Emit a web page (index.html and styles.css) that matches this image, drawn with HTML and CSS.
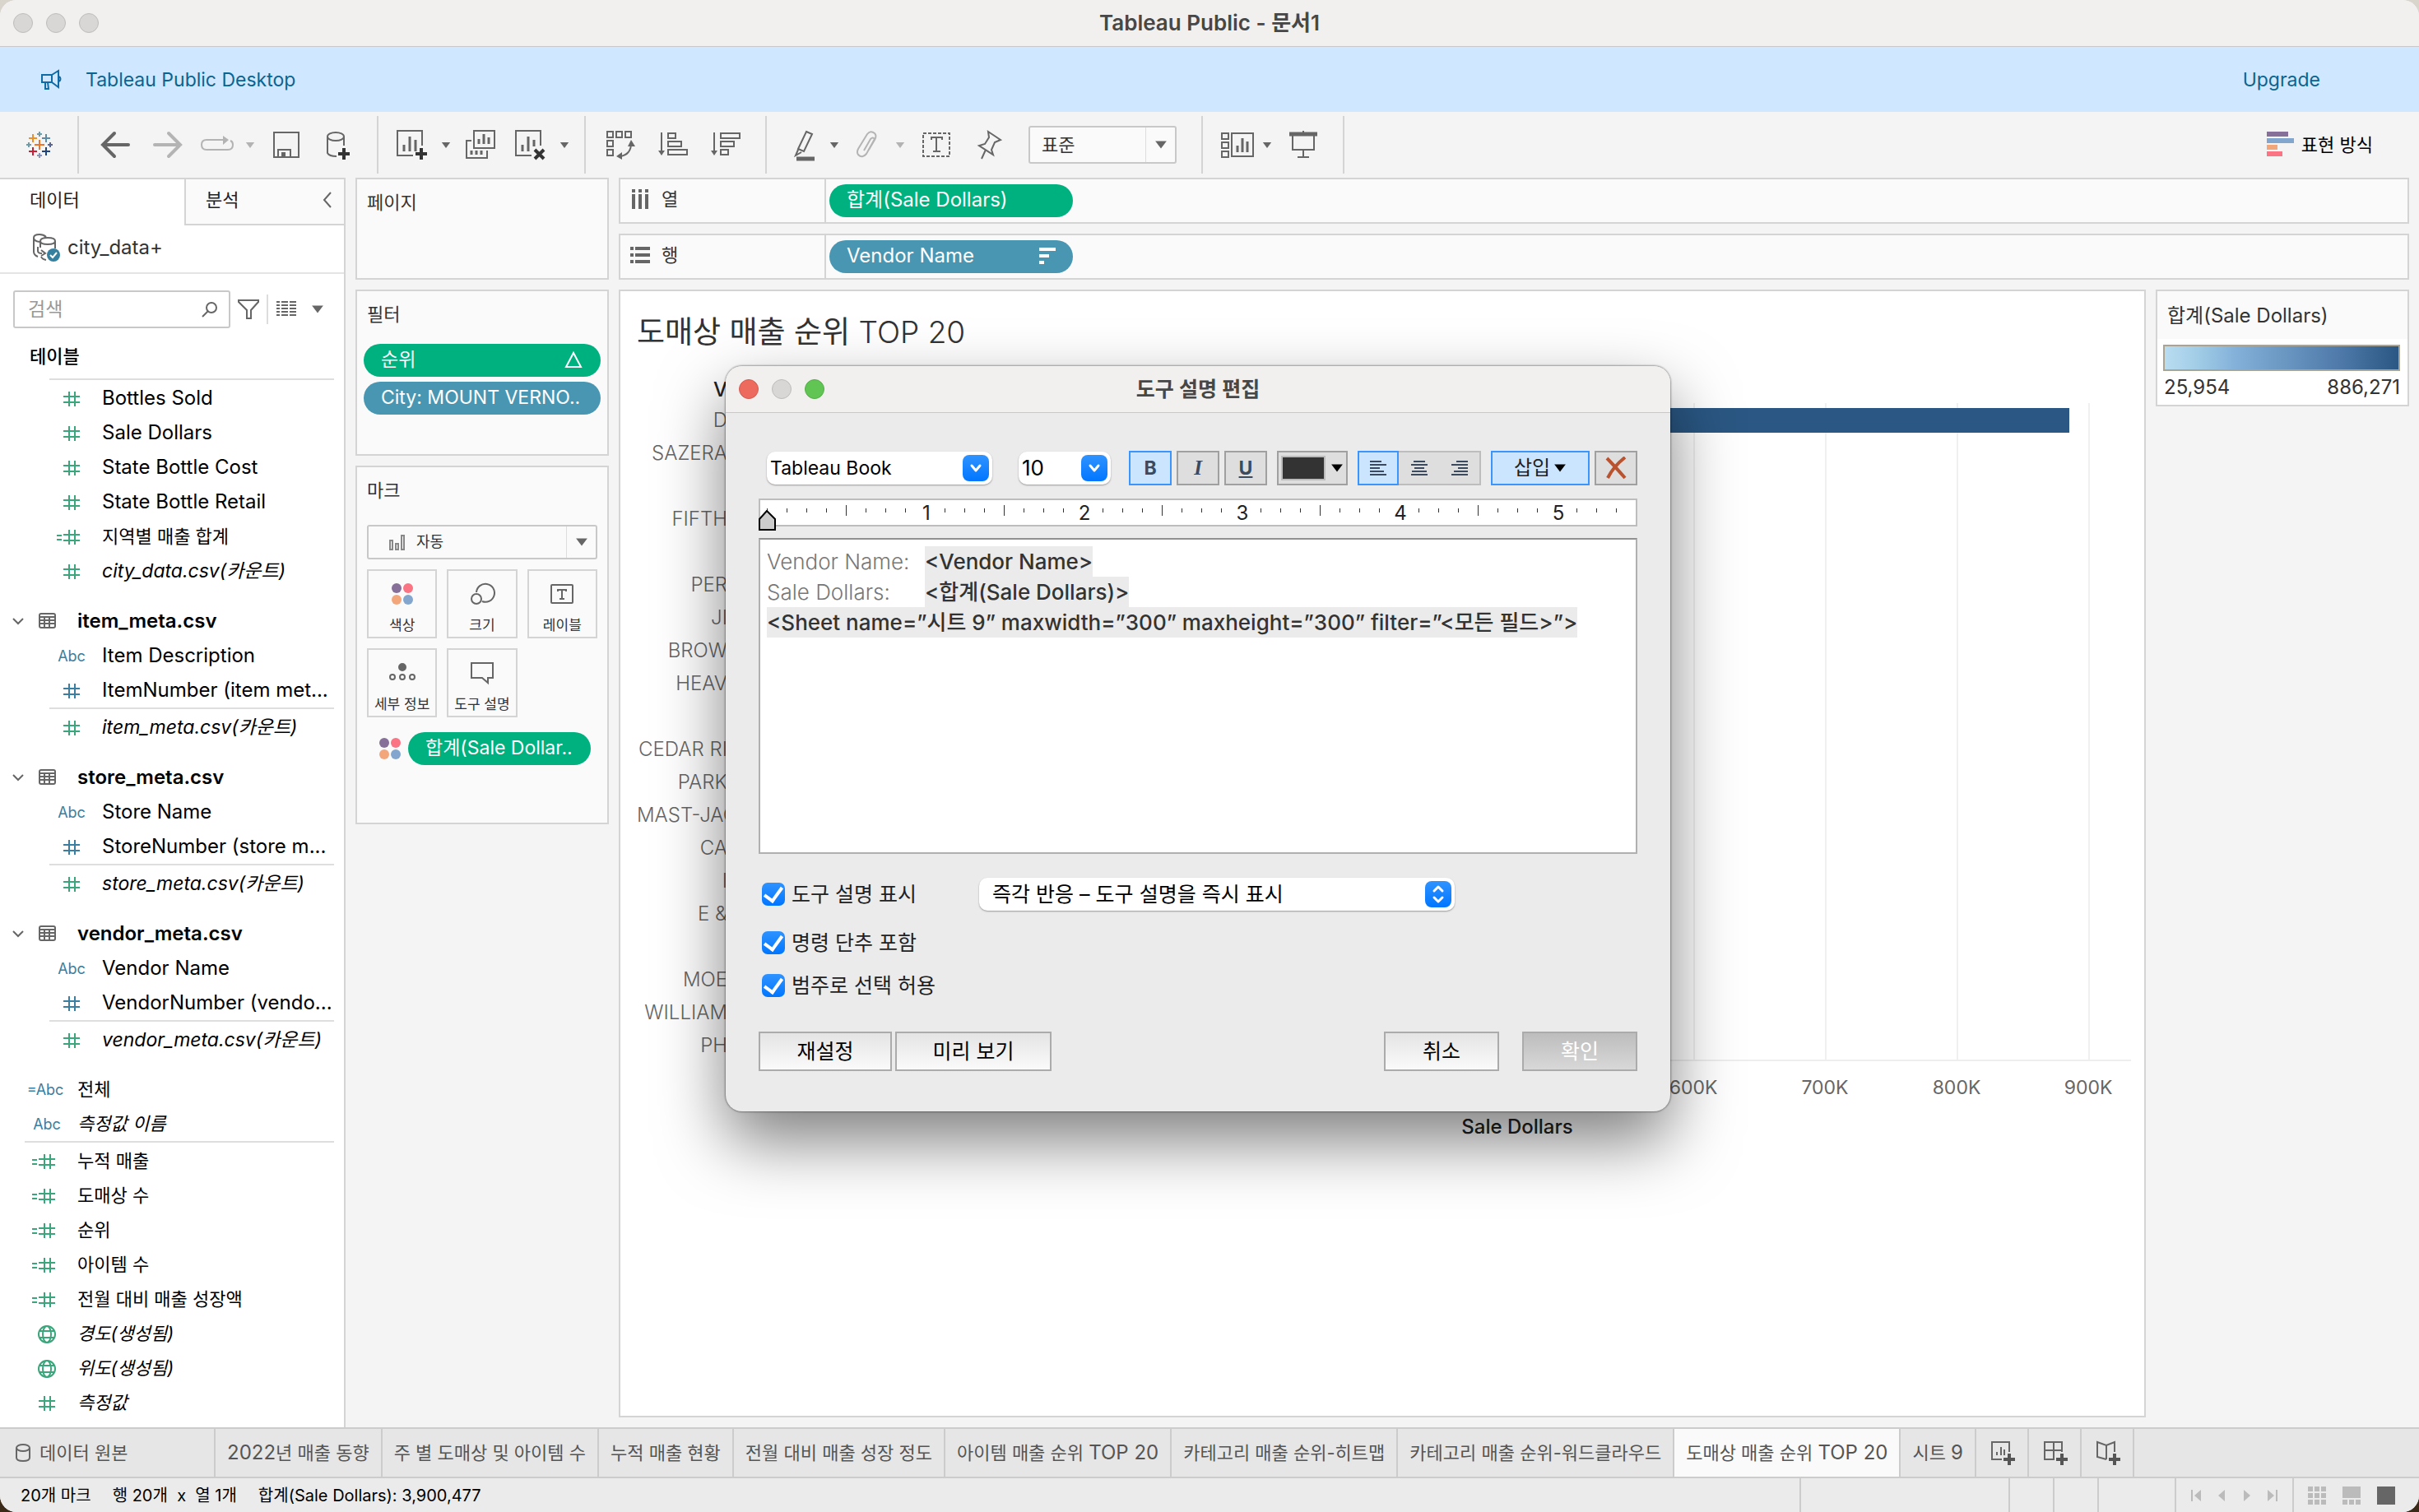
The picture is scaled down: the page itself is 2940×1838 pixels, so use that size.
FILE: index.html
```html
<!DOCTYPE html>
<html lang="ko">
<head>
    <meta charset="UTF-8">
    <meta name="viewport" content="width=device-width, initial-scale=1.0">
    <title>Tableau Public - 문서1</title>
    <link rel="stylesheet" href="styles.css">
</head>
<body>
<!-- 아이콘 모음 -->
<svg class="defs" aria-hidden="true">
    <symbol id="hash" viewBox="0 0 32 24"><path d="M13 3v18M20 3v18M6 9h20M6 16h20"/></symbol>
    <symbol id="calc" viewBox="0 0 50 24"><path d="M22 3v18M29 3v18M15 9h20M15 16h20M7 10h6M7 15h6"/></symbol>
    <symbol id="globe" viewBox="0 0 24 24"><circle cx="12" cy="12" r="10"/><ellipse cx="12" cy="12" rx="5" ry="10"/><path d="M3 8h18M3 16h18"/></symbol>
    <symbol id="sheet" viewBox="0 0 24 24"><rect x="2" y="3" width="19" height="17" rx="2"/><path d="M2 7h19M2 11h19M2 15h19M8 7v13M14 7v13"/></symbol>
    <symbol id="down" viewBox="0 0 14 10"><path d="M1 1h12L7 9z"/></symbol>
    <symbol id="chev" viewBox="0 0 16 16"><path d="M2 5l6 6 6-6"/></symbol>
</svg>

<div class="window">
    <header class="titlebar">
        <span class="light"></span><span class="light"></span><span class="light"></span>
        <h1>Tableau Public - 문서1</h1>
    </header>

    <div class="banner">
        <svg width="28" height="28" viewBox="0 0 28 28"><path d="M3 8h12v9H3zM15 8l8-5v20l-8-6M24 10q3 3 0 6M7 17v8h4l-1-8"/></svg>
        <span>Tableau Public Desktop</span>
        <a href="#">Upgrade</a>
    </div>

    <div class="toolbar">
        <div class="group g1">
            <button type="button" aria-label="시작"><svg viewBox="0 0 36 36">
                <path d="M18 12v12M12 18h12" stroke="#e8762d"/>
                <path d="M10 5v10M5 10h10" stroke="#eb912b"/>
                <path d="M26 5v10M21 10h10" stroke="#5c8ca7"/>
                <path d="M10 21v10M5 26h10" stroke="#c72035"/>
                <path d="M26 21v10M21 26h10" stroke="#1f447e"/>
                <path d="M18 2v6M15 5h6M5 15v6M2 18h6" stroke="#7199a6"/>
                <path d="M31 15v6M28 18h6" stroke="#5b6591"/>
                <path d="M18 28v6M15 31h6" stroke="#8a94bb"/>
            </svg></button>
        </div>
        <div class="group g2">
            <button type="button" class="w64" aria-label="뒤로"><svg viewBox="0 0 36 36"><path class="bold" d="M17 4L3 18l14 14M3 18h31"/></svg></button>
            <button type="button" class="w64 off" aria-label="앞으로"><svg viewBox="0 0 36 36"><path class="bold" d="M19 4l14 14-14 14M33 18H2"/></svg></button>
            <button type="button" class="w56 off" aria-label="재실행"><svg class="wide" viewBox="0 0 42 36"><path d="M28 12H8q-6 0-6 6t6 6h26q6 0 6-6 0-4-3-5"/><path class="fill" stroke="none" d="M28 7l7 5-7 6z"/></svg></button>
            <button type="button" class="w24 off" aria-label="메뉴"><svg class="caret"><use href="#down"/></svg></button>
            <button type="button" class="w64" aria-label="저장"><svg viewBox="0 0 36 36"><path d="M3 3h30v30H3zM8 33v-9h15v9"/><path class="fill" stroke="none" d="M12 27h5v5h-5z"/></svg></button>
            <button type="button" class="w64" aria-label="새 데이터 원본"><svg viewBox="0 0 36 36"><ellipse cx="14" cy="8" rx="10" ry="5"/><path d="M4 8v20q2 4 11 4M24 8v11"/><path class="add" d="M24 22v14M17 29h14"/></svg></button>
        </div>
        <div class="group g3">
            <button type="button" class="w60" aria-label="새 워크시트"><svg viewBox="0 0 36 36"><path d="M20 31H1V1h30v18"/><path class="bar3" d="M9 26v-8M16 26V8M23 26V12"/><path class="add" d="M30 22v14M23 29h14"/></svg></button>
            <button type="button" class="w24" aria-label="메뉴"><svg class="caret"><use href="#down"/></svg></button>
            <button type="button" class="w60" aria-label="복제"><svg viewBox="0 0 36 36"><path d="M10 1h25v21H10zM7 13H1v21h25v-9"/><path class="bar3" d="M16 17v-6M22 17V5M28 17V9M7 30v-5M13 30v-5M19 30v-5"/></svg></button>
            <button type="button" class="w60" aria-label="지우기"><svg viewBox="0 0 36 36"><path d="M20 31H1V1h30v18"/><path class="bar3" d="M9 26v-8M16 26V8M23 20v-8"/><path class="add" d="M24 24l11 11M35 24L24 35"/></svg></button>
            <button type="button" class="w24" aria-label="메뉴"><svg class="caret"><use href="#down"/></svg></button>
        </div>
        <div class="group g4">
            <button type="button" class="w64" aria-label="행과 열 바꾸기"><svg viewBox="0 0 36 36"><path d="M2 2h7v7H2zM13 2h7v7h-7zM24 2h7v7h-7zM2 13h7v7H2zM2 24h7v7H2zM18 32q12-2 13-14"/><path class="fill" stroke="none" d="M31 12l5 8h-9zM13 32l7-5v9z"/></svg></button>
            <button type="button" class="w64" aria-label="오름차순"><svg viewBox="0 0 36 36"><path d="M4 3v24M12 4h9v6h-9zM12 14h16v6H12zM12 24h23v6H12z"/><path class="fill" stroke="none" d="M0 25h8l-4 6z"/></svg></button>
            <button type="button" class="w64" aria-label="내림차순"><svg viewBox="0 0 36 36"><path d="M4 3v24M12 4h23v6H12zM12 14h16v6H12zM12 24h9v6h-9z"/><path class="fill" stroke="none" d="M0 25h8l-4 6z"/></svg></button>
        </div>
        <div class="group g5">
            <button type="button" class="w48" aria-label="하이라이트"><svg viewBox="0 0 36 36"><path d="M20 2l7 3-10 21-7-3zM10 24l-3 7 7-4"/><path class="heavy" d="M8 35h22"/></svg></button>
            <button type="button" class="w24" aria-label="메뉴"><svg class="caret"><use href="#down"/></svg></button>
            <button type="button" class="w56 off" aria-label="그룹"><svg viewBox="0 0 36 36"><path d="M14 25l8-14q3-3 5 0l-10 18q-5 6-10 1-2-3 0-7L18 5q4-5 9-1 3 3 0 8l-7 12"/></svg></button>
            <button type="button" class="w24 off" aria-label="메뉴"><svg class="caret"><use href="#down"/></svg></button>
            <button type="button" class="w64" aria-label="마크 레이블"><svg viewBox="0 0 36 36"><path stroke-dasharray="4 2" d="M2 4h32v28H2z"/><path d="M12 12V9h13v3M18 9v17M14 26h9"/></svg></button>
            <button type="button" class="w64" aria-label="고정"><svg viewBox="0 0 36 36"><path d="M17 2l15 10-7 3-4 9 2 6L6 19l7-2 5-8zM14 24L9 35"/></svg></button>
            <span class="drop fit">
                <select aria-label="맞춤"><option>표준</option></select>
                <span class="drop-arrow"><svg class="caret big"><use href="#down"/></svg></span>
            </span>
        </div>
        <div class="group g6">
            <button type="button" class="w48" aria-label="카드 표시"><svg class="wide" viewBox="0 0 42 36"><path d="M2 4h8v7H2zM2 15h8v7H2zM2 26h8v7H2zM14 4h26v28H14z"/><path class="bar3" d="M21 27v-8M27 27V10M33 27V14"/></svg></button>
            <button type="button" class="w24" aria-label="메뉴"><svg class="caret"><use href="#down"/></svg></button>
            <button type="button" class="w64" aria-label="프레젠테이션"><svg viewBox="0 0 36 36"><path class="heavy" d="M1 5h34"/><path d="M18 1v3M5 6v18h26V6M18 24v9M11 33h14"/></svg></button>
        </div>
        <button type="button" class="showme">
            <svg viewBox="0 0 34 32"><path fill="#866f99" d="M0 0h26v6H0z"/><path fill="#83a6ce" d="M0 8h33v6H0z"/><path fill="#f2a67a" d="M0 16h13v6H0z"/><path fill="#fa7484" d="M0 24h19v6H0z"/></svg>
            표현 방식
        </button>
    </div>

    <main class="work">
        <!-- 데이터 패널 -->
        <aside class="side">
            <div class="side-tabs">
                <button type="button" class="on">데이터</button>
                <button type="button">분석
                    <svg width="12" height="20" viewBox="0 0 12 20"><path d="M10 1L2 10l8 9"/></svg>
                </button>
            </div>
            <div class="source">
                <svg width="36" height="36" viewBox="0 0 36 36"><path d="M18 5Q15 2 10 2 3 2 3 6v17q0 4 5 6M3 6q0 4 7 5M8 17v5q0 3 5 3M12 21l5 4-5 3M11 10q0-4 9-4t9 4-9 4-9-4v8M29 10v9M12 29q1 3 6 4"/><circle cx="27" cy="27" r="8" fill="#35809f" stroke="none"/><path class="tick" d="M23 27l3 3 5-6"/></svg>
                <span>city_data+</span>
            </div>
            <div class="search-row">
                <label class="search">
                    <input type="text" placeholder="검색" aria-label="검색">
                    <svg width="22" height="22" viewBox="0 0 22 22"><circle cx="13" cy="9" r="6"/><path d="M9 13l-7 7"/></svg>
                </label>
                <button type="button" aria-label="필터"><svg width="28" height="28" viewBox="0 0 28 28"><path d="M2 3h24v2l-9 10v10h-5V15L2 5z"/></svg></button>
                <button type="button" class="view" aria-label="보기"><svg width="26" height="22" viewBox="0 0 26 22"><path stroke-dasharray="4 2 8 2 8 2" d="M0 2h25M0 6h25M0 10h25M0 14h25M0 18h25"/></svg></button>
                <button type="button" aria-label="메뉴"><svg class="caret big"><use href="#down"/></svg></button>
            </div>
            <h2>테이블</h2>
            <ul class="fields sub line">
                <li><svg class="ic g"><use href="#hash"/></svg>Bottles Sold</li>
                <li><svg class="ic g"><use href="#hash"/></svg>Sale Dollars</li>
                <li><svg class="ic g"><use href="#hash"/></svg>State Bottle Cost</li>
                <li><svg class="ic g"><use href="#hash"/></svg>State Bottle Retail</li>
                <li class="ko"><svg class="ic g"><use href="#calc"/></svg>지역별 매출 합계</li>
                <li class="it"><svg class="ic g"><use href="#hash"/></svg>city_data.csv(카운트)</li>
            </ul>
            <h3><svg class="ch"><use href="#chev"/></svg><svg class="tb"><use href="#sheet"/></svg>item_meta.csv</h3>
            <ul class="fields sub">
                <li><span class="ic">Abc</span>Item Description</li>
                <li><svg class="ic b"><use href="#hash"/></svg>ItemNumber (item met...</li>
            </ul>
            <ul class="fields sub line">
                <li class="it"><svg class="ic g"><use href="#hash"/></svg>item_meta.csv(카운트)</li>
            </ul>
            <h3><svg class="ch"><use href="#chev"/></svg><svg class="tb"><use href="#sheet"/></svg>store_meta.csv</h3>
            <ul class="fields sub">
                <li><span class="ic">Abc</span>Store Name</li>
                <li><svg class="ic b"><use href="#hash"/></svg>StoreNumber (store m...</li>
            </ul>
            <ul class="fields sub line">
                <li class="it"><svg class="ic g"><use href="#hash"/></svg>store_meta.csv(카운트)</li>
            </ul>
            <h3><svg class="ch"><use href="#chev"/></svg><svg class="tb"><use href="#sheet"/></svg>vendor_meta.csv</h3>
            <ul class="fields sub">
                <li><span class="ic">Abc</span>Vendor Name</li>
                <li><svg class="ic b"><use href="#hash"/></svg>VendorNumber (vendo...</li>
            </ul>
            <ul class="fields sub line">
                <li class="it"><svg class="ic g"><use href="#hash"/></svg>vendor_meta.csv(카운트)</li>
            </ul>
            <ul class="fields root first">
                <li><span class="ic eq">=Abc</span>전체</li>
                <li><span class="ic">Abc</span><em>측정값 이름</em></li>
            </ul>
            <ul class="fields root line">
                <li><svg class="ic g"><use href="#calc"/></svg>누적 매출</li>
                <li><svg class="ic g"><use href="#calc"/></svg>도매상 수</li>
                <li><svg class="ic g"><use href="#calc"/></svg>순위</li>
                <li><svg class="ic g"><use href="#calc"/></svg>아이템 수</li>
                <li><svg class="ic g"><use href="#calc"/></svg>전월 대비 매출 성장액</li>
                <li><svg class="ic g"><use href="#globe"/></svg><em>경도(생성됨)</em></li>
                <li><svg class="ic g"><use href="#globe"/></svg><em>위도(생성됨)</em></li>
                <li><svg class="ic g"><use href="#hash"/></svg><em>측정값</em></li>
            </ul>
        </aside>

        <!-- 페이지, 필터, 마크 카드 -->
        <div class="cards">
            <section class="card pages"><h2>페이지</h2></section>
            <section class="card filters">
                <h2>필터</h2>
                <div class="pill green">순위<svg width="24" height="22" viewBox="0 0 24 22"><path d="M12 3l9 17H3z"/></svg></div>
                <div class="pill blue">City: MOUNT VERNO..</div>
            </section>
            <section class="card marks">
                <h2>마크</h2>
                <span class="drop type">
                    <svg class="type-icon" viewBox="0 0 20 20"><path d="M2 8h3v11H2zM9 12h3v7H9zM16 2h3v17h-3z"/></svg>
                    <select aria-label="마크 유형"><option>자동</option></select>
                    <span class="drop-arrow"><svg class="caret big"><use href="#down"/></svg></span>
                </span>
                <div class="tiles">
                    <button type="button"><svg class="dots" viewBox="0 0 32 32"><circle cx="9" cy="9" r="6" fill="#866f99"/><circle cx="23" cy="9" r="6" fill="#fa7484"/><circle cx="9" cy="23" r="6" fill="#f2a67a"/><circle cx="23" cy="23" r="6" fill="#83a6ce"/></svg>색상</button>
                    <button type="button"><svg viewBox="0 0 32 32"><path d="M9 14A11 11 0 1 1 16 25"/><circle cx="9" cy="22" r="6"/></svg>크기</button>
                    <button type="button"><svg viewBox="0 0 32 32"><rect x="3" y="5" width="26" height="22" rx="1"/><path d="M11 13v-2h10v2M16 11v11M13 22h6"/></svg>레이블</button>
                    <button type="button"><svg viewBox="0 0 32 32"><circle cx="16" cy="9" r="4" fill="#666"/><circle cx="4" cy="21" r="3"/><circle cx="16" cy="21" r="3"/><circle cx="28" cy="21" r="3"/></svg>세부 정보</button>
                    <button type="button"><svg viewBox="0 0 32 32"><path d="M3 4h26v18h-6v6l-7-6H3z"/></svg>도구 설명</button>
                </div>
                <div class="mark-field">
                    <svg class="dots" viewBox="0 0 32 32"><circle cx="9" cy="9" r="6" fill="#866f99"/><circle cx="23" cy="9" r="6" fill="#fa7484"/><circle cx="9" cy="23" r="6" fill="#f2a67a"/><circle cx="23" cy="23" r="6" fill="#83a6ce"/></svg>
                    <div class="pill green">합계(Sale Dollar..</div>
                </div>
            </section>
        </div>

        <div class="view-area">
            <div class="card shelf">
                <h2><svg width="24" height="24" viewBox="0 0 24 24"><path stroke-width="4" d="M4 0v4M12 0v4M20 0v4M4 6v18M12 6v18M20 6v18"/></svg>열</h2>
                <div class="pill green">합계(Sale Dollars)</div>
            </div>
            <div class="card shelf">
                <h2><svg width="24" height="24" viewBox="0 0 24 24"><path stroke-width="4" d="M0 4h4M0 12h4M0 20h4M6 4h18M6 12h18M6 20h18"/></svg>행</h2>
                <div class="pill blue">Vendor Name<svg width="20" height="22" viewBox="0 0 20 22"><path fill="#fff" stroke="none" d="M0 1h20v4H0zM0 9h12v4H0zM0 17h6v4H0z"/></svg></div>
            </div>
            <div class="lower">
                <section class="card canvas">
                    <h2>도매상 매출 순위 <span>TOP 20</span></h2>
                    <div class="chart">
                        <div class="names">
                            <b>V</b>
                            <span>D</span><span>SAZERA</span><span></span><span>FIFTH</span><span></span>
                            <span>PER</span><span>JI</span><span>BROW</span><span>HEAV</span><span></span>
                            <span>CEDAR RI</span><span>PARK</span><span>MAST-JAC</span><span>CA</span><span>I</span>
                            <span>E &amp;</span><span></span><span>MOE</span><span>WILLIAM</span><span>PH</span>
                        </div>
                        <div class="plot-col">
                            <div class="plot"><div class="bar" style="width: 95%"></div></div>
                            <div class="ticks"><span>600K</span><span>700K</span><span>800K</span><span>900K</span></div>
                            <div class="axis-name">Sale Dollars</div>
                        </div>
                    </div>
                </section>
                <section class="card legend">
                    <h2>합계(Sale Dollars)</h2>
                    <div class="ramp"></div>
                    <div class="range"><span>25,954</span><span>886,271</span></div>
                </section>
            </div>
        </div>
    </main>

    <nav class="sheets">
        <a href="#" class="origin"><svg width="20" height="24" viewBox="0 0 20 24"><ellipse cx="10" cy="6" rx="8" ry="4"/><path d="M2 6v12q0 4 8 4t8-4V6"/></svg>데이터 원본</a>
        <a href="#"><span class="lat">2022</span>년 매출 동향</a>
        <a href="#">주 별 도매상 및 아이템 수</a>
        <a href="#">누적 매출 현황</a>
        <a href="#">전월 대비 매출 성장 정도</a>
        <a href="#">아이템 매출 순위 <span class="lat">TOP 20</span></a>
        <a href="#">카테고리 매출 순위-히트맵</a>
        <a href="#">카테고리 매출 순위-워드클라우드</a>
        <a href="#" class="on">도매상 매출 순위 <span class="lat">TOP 20</span></a>
        <a href="#">시트 <span class="lat">9</span></a>
        <button type="button" aria-label="새 워크시트"><svg viewBox="0 0 32 32"><path d="M15 24H3V3h21v12M9 19v-4M14 19V9M18 19v-7"/><path class="add" d="M24 17v14M17 24h14"/></svg></button>
        <button type="button" aria-label="새 대시보드"><svg viewBox="0 0 32 32"><path d="M15 24H3V3h21v12M3 13h21M14 3v21"/><path class="add" d="M24 17v14M17 24h14"/></svg></button>
        <button type="button" aria-label="새 스토리"><svg viewBox="0 0 32 32"><path d="M14 24L3 21V3l11 4 10-4v12M14 7v17"/><path class="add" d="M24 17v14M17 24h14"/></svg></button>
    </nav>

    <footer class="status">
        <span>20개 마크</span><span>행 20개&nbsp; x &nbsp;열 1개</span><span>합계(Sale Dollars): 3,900,477</span>
        <div class="cells"><i class="c1"></i><i class="c2"></i><i class="c2"></i><i class="c3"></i></div>
        <div class="pager">
            <button type="button" aria-label="처음"><svg viewBox="0 0 14 14"><path d="M1 0h2v14H1zM13 0v14L5 7z"/></svg></button>
            <button type="button" aria-label="이전"><svg viewBox="0 0 14 14"><path d="M11 0v14L3 7z"/></svg></button>
            <button type="button" aria-label="다음"><svg viewBox="0 0 14 14"><path d="M3 0v14l8-7z"/></svg></button>
            <button type="button" aria-label="마지막"><svg viewBox="0 0 14 14"><path d="M1 0v14l8-7zM11 0h2v14h-2z"/></svg></button>
        </div>
        <div class="modes">
            <button type="button" aria-label="시트 정렬"><svg viewBox="0 0 22 22"><path d="M0 0h6v6H0zM8 0h6v6H8zM16 0h6v6h-6zM0 8h6v6H0zM8 8h6v6H8zM16 8h6v6h-6zM0 16h6v6H0zM8 16h6v6H8zM16 16h6v6h-6z"/></svg></button>
            <button type="button" aria-label="필름 스트립"><svg viewBox="0 0 22 22"><path d="M0 0h22v14H0zM0 16h6v6H0zM8 16h6v6H8zM16 16h6v6h-6z"/></svg></button>
            <button type="button" class="on" aria-label="탭"><svg viewBox="0 0 22 22"><path d="M0 0h22v22H0z"/></svg></button>
        </div>
    </footer>

    <!-- 도구 설명 편집 창 -->
    <div class="dialog" role="dialog" aria-labelledby="dlgTitle">
        <div class="titlebar">
            <span class="light red"></span><span class="light"></span><span class="light lime"></span>
            <h2 id="dlgTitle">도구 설명 편집</h2>
        </div>
        <form class="dlg-body">
            <div class="format">
                <span class="combo font"><select aria-label="글꼴"><option>Tableau Book</option></select><svg class="cap" viewBox="0 0 32 32"><path d="M11 13l5 6 5-6"/></svg></span>
                <span class="combo size"><select aria-label="크기"><option>10</option></select><svg class="cap" viewBox="0 0 32 32"><path d="M11 13l5 6 5-6"/></svg></span>
                <div class="btns">
                    <button type="button" class="on"><b>B</b></button>
                    <button type="button"><i>I</i></button>
                    <button type="button"><u>U</u></button>
                </div>
                <button type="button" class="color" aria-label="색상"><span></span><svg class="caret big"><use href="#down"/></svg></button>
                <div class="aligns">
                    <button type="button" class="on" aria-label="왼쪽"><svg viewBox="0 0 22 20"><path d="M1 2h14M1 6h20M1 10h12M1 14h17M1 18h20"/></svg></button>
                    <button type="button" aria-label="가운데"><svg viewBox="0 0 22 20"><path d="M4 2h14M1 6h20M5 10h12M2 14h18M1 18h20"/></svg></button>
                    <button type="button" aria-label="오른쪽"><svg viewBox="0 0 22 20"><path d="M7 2h14M1 6h20M9 10h12M4 14h17M1 18h20"/></svg></button>
                </div>
                <div class="btns">
                    <button type="button" class="insert on">삽입<svg class="caret big"><use href="#down"/></svg></button>
                    <button type="button" aria-label="지우기"><svg width="28" height="28" viewBox="0 0 28 28"><path d="M3 2q8 8 22 24M25 1Q11 12 4 26" stroke="#b9532f" stroke-width="4"/></svg></button>
                </div>
            </div>
            <div class="ruler">
                <svg class="marker" width="22" height="26" viewBox="0 0 22 26"><path d="M1 11L10 1l10 10v13H1z" fill="#ccc" stroke="#000" stroke-width="2"/></svg>
                <span>1</span><span>2</span><span>3</span><span>4</span><span>5</span>
            </div>
            <div class="editor" contenteditable="true" role="textbox" aria-label="도구 설명">
                <p><span class="key">Vendor Name:</span><mark>&lt;Vendor Name&gt;</mark></p>
                <p><span class="key">Sale Dollars:</span><mark>&lt;합계(Sale Dollars)&gt;</mark></p>
                <p><mark>&lt;Sheet name=”시트 9” maxwidth=”300” maxheight=”300” filter=”&lt;모든 필드&gt;”&gt;</mark></p>
            </div>
            <div class="options">
                <label class="show"><input type="checkbox" checked>도구 설명 표시</label>
                <span class="combo react"><select aria-label="반응"><option>즉각 반응 – 도구 설명을 즉시 표시</option></select><svg class="cap" viewBox="0 0 32 32"><path d="M11 12l5-5 5 5M11 20l5 5 5-5"/></svg></span>
            </div>
            <label><input type="checkbox" checked>명령 단추 포함</label>
            <label><input type="checkbox" checked>범주로 선택 허용</label>
            <div class="actions">
                <button type="button" class="a1">재설정</button>
                <button type="button" class="a2">미리 보기</button>
                <button type="button" class="a3">취소</button>
                <button type="submit" class="a3" disabled>확인</button>
            </div>
        </form>
    </div>
</div>
</body>
</html>
```
FILE: styles.css
```css
*{
    margin: 0;
    padding: 0;
    box-sizing: border-box;
}
body{
    background: linear-gradient(#d9d5cd 50%, #3b2a18 50%);
    font: 23px/28px Inter, "Noto Sans CJK KR", sans-serif;
    color: #333;
}
ul{
    list-style: none;
}
a{
    color: inherit;
    text-decoration: none;
}
button, input, select{
    font: inherit;
    color: inherit;
    border: 0;
    background: none;
}
h1, h2, h3{
    font-size: 23px;
    font-weight: 400;
}
svg{
    fill: none;
    stroke: #666;
    stroke-width: 2;
    flex: none;
}
.defs{
    position: absolute;
    width: 0;
    height: 0;
}
.window{
    position: relative;
    display: flex;
    flex-direction: column;
    min-height: 100vh;
    border-radius: 20px;
    overflow: hidden;
    background: #f4f4f4;
}
.titlebar{
    display: flex;
    align-items: center;
    gap: 16px;
    height: 57px;
    padding: 0 16px;
    background: #f1f0ee;
    border-bottom: 1px solid #c8c8c8;
}
.titlebar h1, .titlebar h2{
    flex: 1;
    padding-right: 120px;
    text-align: center;
    font-size: 26px;
    line-height: 30px;
    font-weight: 600;
    color: #474747;
}
.titlebar h2{
    font-size: 25px;
}
.light{
    width: 24px;
    height: 24px;
    border-radius: 50%;
    background: #d8d7d5;
    border: 1px solid #bdbcba;
}
.light.red{
    background: #ed6a5e;
    border-color: #d55a50;
}
.light.lime{
    background: #61c554;
    border-color: #55ad47;
}
.banner{
    display: flex;
    align-items: center;
    gap: 28px;
    height: 79px;
    padding: 0 120px 0 48px;
    background: #cfe8ff;
    color: #0b6490;
}
.banner svg{
    stroke: #0f6ba5;
}
.banner a{
    margin-left: auto;
}

/* 도구 모음 */
.toolbar{
    display: flex;
    align-items: center;
    height: 80px;
}
.group{
    display: flex;
    align-items: center;
    height: 70px;
    border-right: 2px solid #d4d4d4;
}
.group button{
    display: flex;
    justify-content: center;
    align-items: center;
    height: 44px;
}
.group svg{
    width: 36px;
    height: 36px;
    overflow: visible;
}
.group svg.wide{
    width: 42px;
}
.group svg.caret, .caret{
    width: 12px;
    height: 9px;
    fill: #666;
    stroke: none;
}
svg.caret.big{
    width: 16px;
    height: 12px;
}
.off svg{
    opacity: .45;
}
.bold{
    stroke-width: 4;
    stroke-linecap: round;
}
.bar3{
    stroke-width: 3;
}
.heavy{
    stroke-width: 5;
}
.fill{
    fill: #666;
}
.add{
    stroke: #333;
    stroke-width: 4;
}
.w24{
    width: 24px;
}
.w48{
    width: 48px;
}
.w56{
    width: 56px;
}
.w60{
    width: 60px;
}
.w64{
    width: 64px;
}
.g1{
    padding: 0 28px 0 30px;
}
.g2{
    padding: 0 14px 0 12px;
}
.g3{
    padding: 0 12px 0 10px;
}
.g4{
    padding: 0 16px 0 10px;
}
.g5{
    padding: 0 30px 0 22px;
}
.g6{
    padding: 0 16px 0 18px;
}
.drop{
    display: flex;
    align-items: center;
    border: 2px solid #c8c8c8;
    border-radius: 3px;
    background: #fafafa;
}
.drop select{
    flex: 1;
    height: 100%;
    appearance: none;
}
.drop-arrow{
    display: flex;
    justify-content: center;
    align-items: center;
    width: 36px;
    height: 100%;
    border-left: 1px solid #ddd;
}
.fit{
    width: 180px;
    height: 46px;
    margin-left: 16px;
}
.fit select{
    padding-left: 14px;
    font-size: 22px;
}
.showme{
    display: flex;
    align-items: center;
    gap: 8px;
    margin-left: auto;
    margin-right: 56px;
    color: #000;
    font-size: 22px;
}
.showme svg{
    width: 34px;
    height: 32px;
    stroke: none;
}

.work{
    flex: 1;
    display: flex;
    gap: 12px;
    padding-right: 12px;
}
/* 데이터 패널 */
.side{
    flex: none;
    width: 420px;
    background: #fff;
    border: solid #d4d4d4;
    border-width: 2px 2px 0 0;
    color: #000;
}
.side-tabs{
    display: flex;
    height: 56px;
}
.side-tabs button{
    display: flex;
    align-items: center;
    justify-content: space-between;
    width: 194px;
    padding: 0 14px 4px 24px;
    background: #fafafa;
    border: solid #d4d4d4;
    border-width: 0 0 2px 2px;
    color: #222;
    font-size: 22px;
}
.side-tabs .on{
    width: 224px;
    padding-left: 34px;
    background: #fff;
    border-color: #fff;
}
.source{
    display: flex;
    align-items: center;
    gap: 8px;
    height: 59px;
    padding: 0 0 4px 38px;
    border-bottom: 2px solid #e4e4e4;
    color: #333;
    font-size: 24px;
}
.source .tick{
    stroke: #fff;
}
.search-row{
    display: flex;
    align-items: center;
    height: 86px;
    padding: 0 24px 0 16px;
    gap: 8px;
}
.search{
    display: flex;
    align-items: center;
    width: 264px;
    height: 46px;
    padding: 0 12px 0 16px;
    border: 2px solid #c8c8c8;
    border-radius: 3px;
}
.search input{
    flex: 1;
    min-width: 0;
    outline: 0;
}
.search input::placeholder{
    color: #999;
}
.search-row button{
    display: flex;
    align-items: center;
}
.search-row .view{
    height: 36px;
    padding: 0 8px 0 10px;
    border-left: 2px solid #ddd;
}
.side h2{
    padding: 0 36px;
    height: 41px;
    font-size: 22px;
    font-weight: 500;
}
.fields{
    padding-right: 12px;
}
.fields li{
    display: flex;
    align-items: center;
    height: 42px;
    white-space: nowrap;
}
.sub{
    margin-left: 60px;
    font-size: 24px;
}
.root{
    margin-left: 30px;
    font-size: 22px;
}
.first{
    margin-top: 18px;
}
.line{
    padding-top: 3px;
    background: linear-gradient(#dedede, #dedede) 0 0/calc(100% - 12px) 2px no-repeat;
}
.sub .ko{
    font-size: 22px;
}
.sub .it{
    font-size: 23px;
    font-style: italic;
}
.ic{
    width: 50px;
    height: 24px;
    margin: 2px 12px 0 2px;
    text-align: center;
    font-size: 18px;
    line-height: 24px;
    font-style: normal;
    color: #3a7ea1;
}
.eq{
    margin-left: 0;
    margin-right: 14px;
}
.g{
    stroke: #3ba57b;
}
.b{
    stroke: #3a7ea1;
}
.side h3{
    display: flex;
    align-items: center;
    height: 42px;
    margin-top: 19px;
    padding-left: 14px;
    font-size: 24px;
    font-weight: 600;
}
.ch{
    width: 16px;
    height: 16px;
    margin-right: 16px;
}
.tb{
    width: 24px;
    height: 24px;
    margin-right: 24px;
}

/* 카드 */
.card{
    background: #fafafa;
    border: 2px solid #d4d4d4;
}
.cards{
    flex: none;
    display: flex;
    flex-direction: column;
    gap: 12px;
    width: 308px;
}
.cards h2{
    padding: 14px 12px 0;
    height: 64px;
    font-size: 22px;
}
.pages{
    height: 124px;
}
.filters{
    height: 202px;
    padding: 0 8px;
}
.cards .filters h2{
    padding-left: 4px;
}
.marks{
    height: 436px;
    padding: 0 12px;
}
.cards .marks h2{
    height: 70px;
    padding-left: 0;
}
.pill{
    display: flex;
    align-items: center;
    justify-content: space-between;
    height: 40px;
    margin-bottom: 6px;
    padding: 0 21px 2px;
    border-radius: 20px;
    color: #fff;
    white-space: nowrap;
}
.pill svg{
    stroke: #fff;
}
.green{
    background: #00b180;
}
.blue{
    background: #4996b2;
}
.type{
    height: 42px;
    margin-bottom: 12px;
    font-size: 18px;
}
.type-icon{
    width: 20px;
    height: 20px;
    margin: 0 14px 0 24px;
    stroke: #888;
}
.tiles{
    display: grid;
    grid-template-columns: repeat(3, 1fr);
    gap: 12px;
}
.tiles button{
    display: flex;
    flex-direction: column;
    align-items: center;
    gap: 8px;
    height: 84px;
    padding-top: 12px;
    border: 2px solid #d4d4d4;
    font-size: 17px;
    line-height: 28px;
    white-space: nowrap;
}
.tiles svg{
    width: 32px;
    height: 32px;
}
svg.dots{
    width: 32px;
    height: 32px;
    stroke: none;
}
.mark-field{
    display: flex;
    gap: 6px;
    padding: 18px 8px 0 12px;
}
.mark-field .dots{
    margin-top: 4px;
}
.mark-field .pill{
    flex: 1;
}
.view-area{
    flex: 1;
    min-width: 0;
    display: flex;
    flex-direction: column;
    gap: 12px;
}
.shelf{
    display: flex;
    height: 56px;
}
.shelf h2{
    display: flex;
    align-items: center;
    gap: 14px;
    width: 250px;
    padding: 0 12px 4px;
    font-size: 22px;
    border-right: 2px solid #d4d4d4;
}
.shelf .pill{
    width: 296px;
    margin: 6px 4px;
    font-size: 24px;
}
.lower{
    flex: 1;
    display: flex;
    gap: 12px;
    align-items: flex-start;
    padding-bottom: 12px;
}
.canvas{
    flex: 1;
    min-width: 0;
    align-self: stretch;
    padding: 28px 16px 0 20px;
    background: #fff;
}
.canvas h2{
    font-size: 37px;
    line-height: 44px;
}
.canvas h2 span{
    font-weight: 300;
}
.chart{
    display: flex;
    padding-top: 24px;
    color: #666;
    font-weight: 300;
}
.names{
    flex: none;
    width: 110px;
    margin-right: 214px;
    font-size: 24px;
}
.names b, .names span{
    display: block;
    height: 40px;
    line-height: 42px;
    text-align: right;
    white-space: nowrap;
}
.names b{
    font-weight: 500;
    color: #222;
    line-height: 48px;
}
.plot-col{
    flex: 1;
    min-width: 0;
    padding-top: 40px;
}
.plot{
    height: 800px;
    padding-top: 6px;
    border-bottom: 2px solid #eee;
    background: repeating-linear-gradient(90deg, #f0f0f0 0 2px, transparent 2px 160px);
}
.bar{
    height: 30px;
    background: #2a5783;
}
.ticks{
    display: flex;
    gap: 80px;
    padding: 18px 0 0 920px;
    font-weight: 400;
}
.ticks span{
    width: 80px;
    text-align: center;
}
.axis-name{
    padding-top: 20px;
    text-align: center;
    font-size: 24px;
    font-weight: 500;
    color: #222;
}
.legend{
    flex: none;
    width: 308px;
    background: #fff;
    font-size: 24px;
}
.legend h2{
    height: 58px;
    padding: 16px 12px 0;
    background: #fafafa;
    font-size: 24px;
}
.ramp{
    height: 32px;
    margin: 7px 9px 6px 7px;
    border: 2px solid #aca493;
    background: linear-gradient(90deg, #b9ddf1, #a0cbe6 15%, #83b1d9 30%, #4e79a9 75%, #2a5783);
}
.range{
    display: flex;
    justify-content: space-between;
    padding: 0 9px 7px 8px;
}

/* 시트 탭 */
.sheets{
    display: flex;
    height: 62px;
    background: #e6e6e6;
    border: solid #ccc;
    border-width: 2px 0;
    color: #555;
    font-size: 22px;
}
.sheets a, .sheets button{
    padding: 0 14px;
    border-right: 2px solid #ccc;
    line-height: 58px;
    white-space: nowrap;
}
.sheets .lat{
    font-size: 24px;
}
.sheets .origin{
    display: flex;
    align-items: center;
    width: 262px;
    gap: 10px;
    padding-left: 18px;
}
.sheets .on{
    background: #fafafa;
}
.sheets button{
    display: flex;
    align-items: center;
    width: 64px;
    padding: 0 14px 0 16px;
}
.sheets svg{
    overflow: visible;
}
.sheets .add{
    stroke: #555;
}
.status{
    display: flex;
    align-items: center;
    gap: 26px;
    height: 41px;
    padding-left: 25px;
    background: #ebebeb;
    font-size: 20px;
    color: #000;
}
.cells, .pager, .modes{
    display: flex;
    align-items: center;
    height: 100%;
    border-left: 2px solid #ccc;
}
.cells{
    margin-left: auto;
    margin-right: -26px;
}
.cells i{
    height: 100%;
    border-right: 2px solid #ccc;
}
.cells .c1{
    width: 254px;
}
.cells .c2{
    width: 54px;
}
.cells .c3{
    width: 94px;
}
.pager{
    width: 141px;
    margin-right: -26px;
    justify-content: space-evenly;
    border: 0;
}
.pager svg{
    width: 14px;
    height: 14px;
}
.pager svg, .modes svg{
    fill: #bbb;
    stroke: none;
}
.modes{
    gap: 20px;
    padding: 0 29px 0 17px;
}
.modes button{
    display: flex;
}
.modes svg{
    width: 22px;
    height: 22px;
}
.modes .on svg{
    fill: #666;
}

/* 도구 설명 편집 창 */
.dialog{
    position: absolute;
    left: 30%;
    top: 445px;
    width: 1148px;
    background: #ebebeb;
    border-radius: 20px;
    box-shadow: 0 0 2px 1px rgba(0,0,0,.35), 0 36px 80px rgba(0,0,0,.5);
    font-size: 25px;
    color: #222;
}
.dialog .titlebar{
    border-radius: 20px 20px 0 0;
}
.dlg-body{
    padding: 46px 40px 49px;
}
.format{
    display: flex;
    align-items: center;
    gap: 12px;
    padding-left: 10px;
}
.combo{
    display: flex;
    align-items: center;
    height: 40px;
    padding-right: 4px;
    border-radius: 10px;
    background: #fff;
    box-shadow: 0 1px 2px rgba(0,0,0,.35);
}
.combo select{
    flex: 1;
    min-width: 0;
    padding-left: 4px;
    appearance: none;
    color: #000;
}
.font{
    width: 274px;
    font-size: 23px;
}
.size{
    width: 112px;
    margin: 0 10px 0 20px;
    font-size: 26px;
}
.cap{
    width: 32px;
    height: 32px;
    border-radius: 8px;
    background: linear-gradient(#2f93ff, #0076ff);
    stroke: #fff;
    stroke-width: 3;
    stroke-linecap: round;
    stroke-linejoin: round;
}
.btns{
    display: flex;
    gap: 6px;
}
.btns button, .color, .aligns button{
    display: flex;
    align-items: center;
    justify-content: center;
    width: 52px;
    height: 42px;
    border: 2px solid #a0a0a0;
    background: #dedede;
    color: #3b4a5f;
}
.btns b, .btns u{
    font-size: 23px;
    font-weight: 700;
}
.btns i{
    font: italic 700 25px "Liberation Serif", serif;
}
.format .on{
    border-color: #3a96fd;
    background: #cbe5ff;
}
.format .insert{
    width: 120px;
    gap: 4px;
    font-size: 24px;
    color: #222;
}
.format .caret{
    fill: #000;
}
.format .color{
    width: 86px;
    gap: 6px;
}
.color span{
    width: 54px;
    height: 30px;
    border: 2px solid #bbb;
    background: #333;
}
.aligns{
    display: flex;
}
.aligns button{
    width: 50px;
    border-color: #bdbdbd;
    border-left: 0;
    border-right: 0;
}
.aligns .on{
    border: 2px solid #3a96fd;
}
.aligns button:last-child{
    border-right: 2px solid #bdbdbd;
}
.aligns svg{
    width: 22px;
    height: 20px;
    stroke: #3b4a5f;
}
.ruler{
    position: relative;
    display: flex;
    height: 34px;
    margin: 16px 0 14px;
    padding-left: 178px;
    border: 2px solid #bdbdbd;
    background:
        repeating-linear-gradient(90deg, #333 0 1px, transparent 1px 192px) 104px 6px/100% 13px no-repeat,
        repeating-linear-gradient(90deg, #333 0 1px, transparent 1px 24px) 8px 10px/100% 5px no-repeat,
        #fff;
    color: #222;
}
.ruler span{
    flex: none;
    width: 48px;
    height: 28px;
    margin-right: 144px;
    text-align: center;
    font-size: 24px;
    line-height: 32px;
    background: linear-gradient(#fff, #fff) 50% 0/20px 100% no-repeat;
}
.marker{
    position: absolute;
    left: -2px;
    top: 12px;
}
.editor{
    height: 384px;
    padding: 8px;
    border: 2px solid #b0b0b0;
    border-top-color: #909090;
    background: #fff;
    outline: 0;
    font-size: 26px;
    white-space: nowrap;
}
.editor p{
    display: flex;
    height: 37px;
    line-height: 37px;
}
.key{
    width: 192px;
    font-weight: 300;
    color: #777;
}
.editor mark{
    background: #ebebeb;
    color: #333;
    font-weight: 500;
}
.dlg-body label{
    display: flex;
    align-items: center;
    gap: 8px;
    padding-left: 4px;
    height: 52px;
}
.dlg-body .options{
    display: flex;
    align-items: center;
    height: 58px;
    margin: 20px 0 4px;
}
.dlg-body .show{
    width: 268px;
}
.react{
    width: 578px;
}
.react select{
    padding-left: 16px;
}
input[type=checkbox]{
    appearance: none;
    display: grid;
    place-items: center;
    width: 28px;
    height: 28px;
    border-radius: 7px;
    background: linear-gradient(#2f93ff, #0076ff);
}
input[type=checkbox]::after{
    content: "";
    width: 10px;
    height: 18px;
    margin-bottom: 4px;
    border: solid #fff;
    border-width: 0 4px 4px 0;
    transform: rotate(36deg);
}
.actions{
    display: flex;
    gap: 4px;
    padding-top: 30px;
}
.actions button{
    height: 48px;
    border: 2px solid #ababab;
    background: linear-gradient(#e4e4e4, #fafafa);
    color: #000;
}
.actions .a1{
    width: 162px;
}
.actions .a2{
    width: 190px;
    margin-right: auto;
}
.actions .a3{
    width: 140px;
    margin-left: 24px;
}
.actions button:disabled{
    background: linear-gradient(#bdbdbd, #d8d8d8);
    color: #fff;
}
```
